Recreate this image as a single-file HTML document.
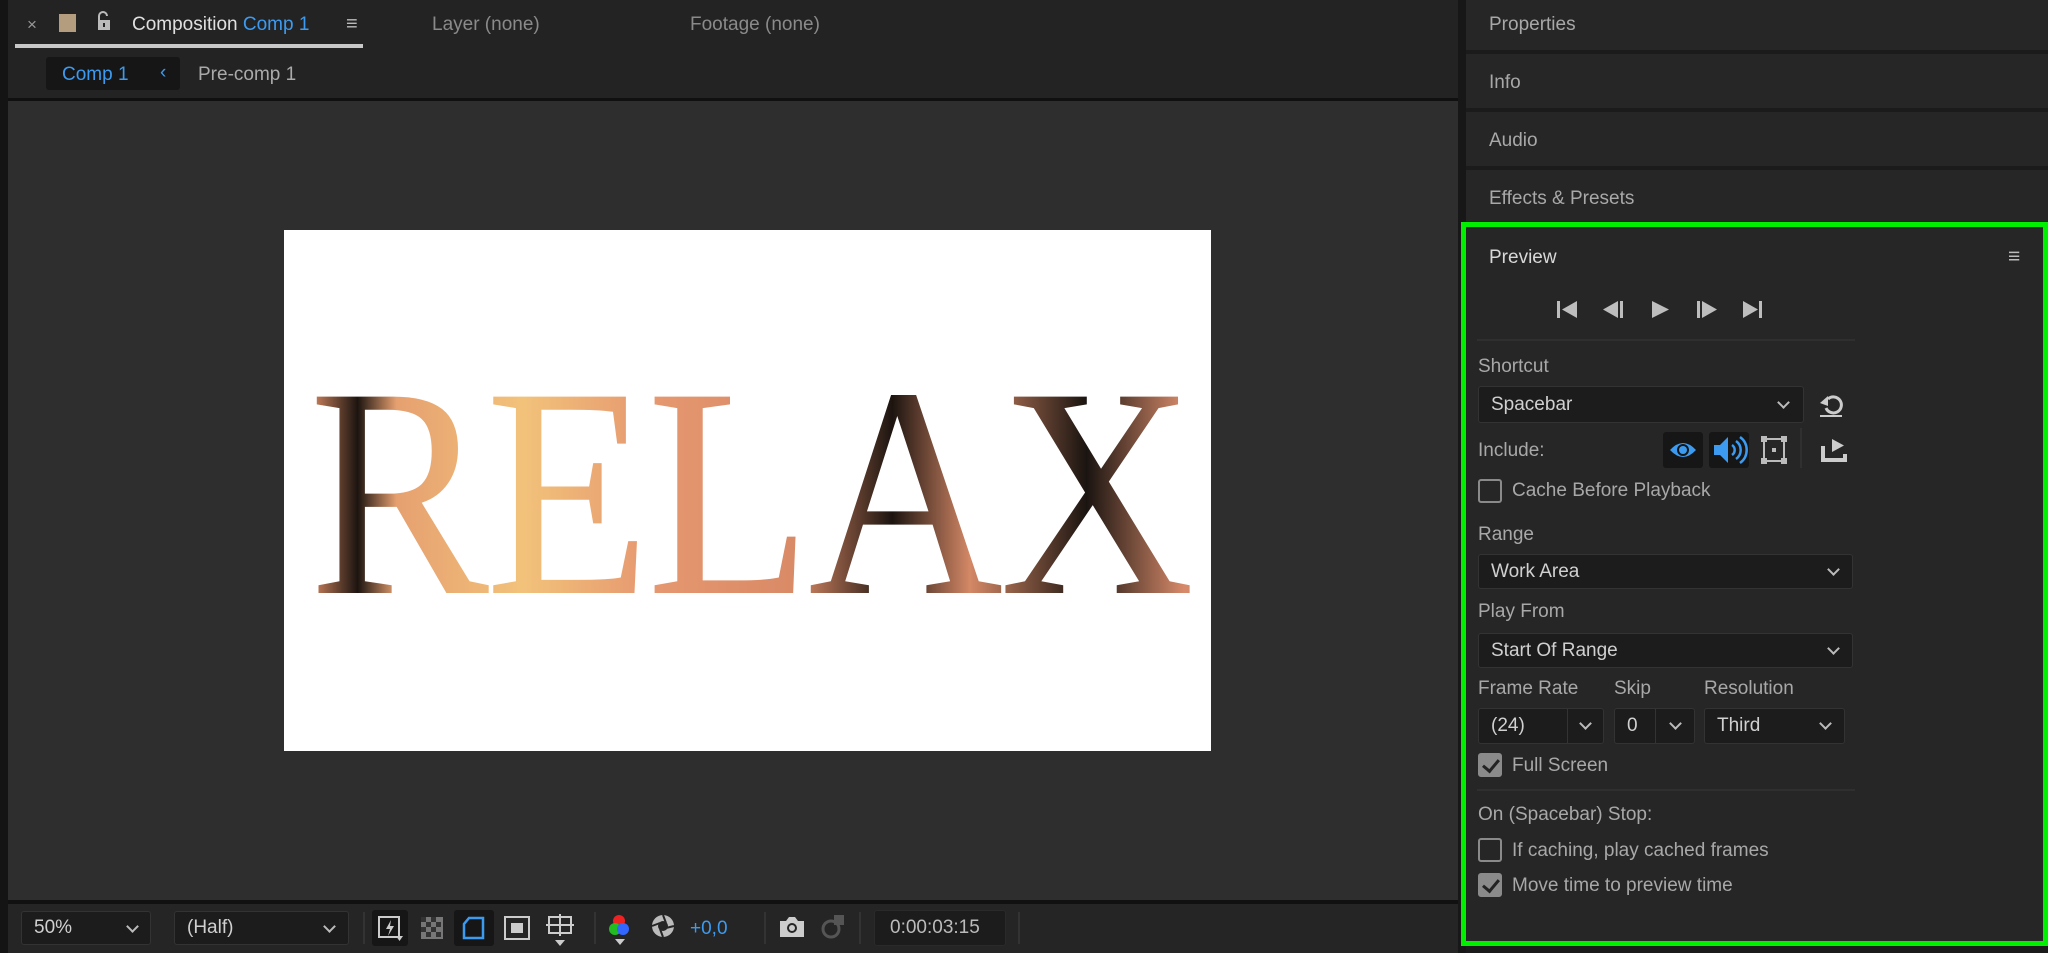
<!DOCTYPE html>
<html><head><meta charset="utf-8"><style>
*{margin:0;padding:0;box-sizing:border-box}
body{width:2048px;height:953px;background:#1b1b1b;position:relative;overflow:hidden;font-family:"Liberation Sans","DejaVu Sans",sans-serif;color:#a8a8a8}
.a{position:absolute}
.t{position:absolute;white-space:nowrap;font-size:19px;line-height:1}
.dd{position:absolute;background:#1c1c1c;border:1px solid #333;border-radius:3px;color:#d0d0d0;font-size:19px}
.dd span{position:absolute;left:12px;top:50%;transform:translateY(-50%)}
.chev{position:absolute;width:9px;height:9px;border-right:2px solid #bbb;border-bottom:2px solid #bbb;transform:rotate(45deg)}
.cb{position:absolute;width:24px;height:24px;border:2px solid #8a8a8a;border-radius:3px}
.cbk{background:#8a8a8a}
.cbk:after{content:"";position:absolute;left:6px;top:1px;width:7px;height:13px;border-right:3px solid #222;border-bottom:3px solid #222;transform:rotate(40deg)}
</style></head><body>
<!-- left panel -->
<div class="a" style="left:0;top:0;width:1458px;height:953px;background:#232323"></div>
<div class="a" style="left:0;top:0;width:8px;height:953px;background:#141414"></div>
<div class="t" style="left:27px;top:16px;font-size:17px;color:#999">×</div>
<div class="a" style="left:59px;top:14px;width:17px;height:18px;background:#b39d7e"></div>
<svg class="a" style="left:96px;top:10px" width="16" height="22" viewBox="0 0 16 22"><path d="M3 10V6a4 4 0 0 1 8 0" fill="none" stroke="#bbb" stroke-width="2"/><rect x="2" y="10" width="12" height="10" fill="#bbb"/><rect x="7" y="13" width="2" height="4" fill="#232323"/></svg>
<div class="t" style="left:132px;top:15px;color:#e0e0e0">Composition <span style="color:#3c9bf0">Comp 1</span></div>
<div class="t" style="left:346px;top:14px;color:#bbb;font-size:20px">≡</div>
<div class="a" style="left:15px;top:44px;width:348px;height:4px;background:#c8c8c8"></div>
<div class="t" style="left:432px;top:15px;color:#8a8a8a">Layer (none)</div>
<div class="t" style="left:690px;top:15px;color:#8a8a8a">Footage (none)</div>
<div class="a" style="left:46px;top:57px;width:134px;height:33px;background:#161616;border-radius:3px"></div>
<div class="t" style="left:62px;top:65px;color:#3c9bf0">Comp 1</div>
<div class="t" style="left:160px;top:63px;color:#3c9bf0">‹</div>
<div class="t" style="left:198px;top:65px;color:#aaa">Pre-comp 1</div>
<div class="a" style="left:8px;top:98px;width:1450px;height:3px;background:#101010"></div>
<div class="a" style="left:8px;top:101px;width:1450px;height:799px;background:#2e2e2e"></div>
<!-- canvas -->
<div class="a" style="left:284px;top:230px;width:927px;height:521px;background:#fff;overflow:hidden">
<div class="a" style="left:25px;top:155px;height:215px;font-family:'Liberation Serif',serif;font-size:300px;line-height:215px;letter-spacing:-4px;transform:scaleX(0.9);transform-origin:0 0;background:linear-gradient(90deg,#d88a62 0%,#1c1410 5%,#e6a070 9%,#f2c27a 22%,#e69870 35%,#d98a66 50%,#1c1410 60%,#d48866 68%,#1a1410 80%,#d68a6a 90%);-webkit-background-clip:text;background-clip:text;color:transparent;width:1080px">RELAX</div>
</div>
<!-- bottom toolbar -->
<div class="a" style="left:8px;top:900px;width:1450px;height:4px;background:#111"></div>
<div class="a" style="left:8px;top:904px;width:1450px;height:49px;background:#252525"></div>
<div class="dd" style="left:21px;top:911px;width:130px;height:34px"><span>50%</span><i class="chev" style="left:106px;top:10px"></i></div>
<div class="dd" style="left:174px;top:911px;width:175px;height:34px"><span>(Half)</span><i class="chev" style="left:150px;top:10px"></i></div>
<div class="a" style="left:363px;top:912px;width:2px;height:32px;background:#333"></div>
<div class="a" style="left:372px;top:910px;width:36px;height:36px;background:#161616;border-radius:3px"></div>
<svg class="a" style="left:378px;top:916px" width="26" height="26"><rect x="1" y="1" width="20" height="20" fill="none" stroke="#ccc" stroke-width="2"/><path d="M13 4l-5 9h4l-2 7 6-10h-4z" fill="#ccc"/><path d="M18 20h7l-3.5 5z" fill="#ccc"/></svg>
<svg class="a" style="left:420px;top:916px" width="24" height="24"><rect x="1" y="1" width="22" height="22" fill="#777"/><path d="M1 1h5v5H1zM11 1h5v5h-5zM6 6h5v5H6zM16 6h5v5h-5zM1 11h5v5H1zM11 11h5v5h-5zM6 16h5v5H6zM16 16h5v5h-5z" fill="#333"/></svg>
<div class="a" style="left:454px;top:910px;width:40px;height:36px;background:#161616;border-radius:3px"></div>
<svg class="a" style="left:461px;top:915px" width="26" height="26"><path d="M8 3h14v20H3V9z" fill="none" stroke="#3c9bf0" stroke-width="2.5"/></svg>
<svg class="a" style="left:504px;top:916px" width="26" height="24"><rect x="1" y="1" width="24" height="22" fill="none" stroke="#ccc" stroke-width="2"/><rect x="7" y="7" width="12" height="10" fill="#ccc"/></svg>
<svg class="a" style="left:546px;top:912px" width="28" height="34"><rect x="3" y="5" width="22" height="16" fill="none" stroke="#ccc" stroke-width="2"/><path d="M14 2v22M0 13h28" stroke="#ccc" stroke-width="2"/><path d="M9 28h10l-5 6z" fill="#ccc"/></svg>
<div class="a" style="left:594px;top:912px;width:2px;height:32px;background:#333"></div>
<svg class="a" style="left:606px;top:912px" width="28" height="34"><circle cx="13" cy="9" r="6" fill="#e22"/><circle cx="9" cy="17" r="6" fill="#2b2"/><circle cx="17" cy="17" r="6" fill="#36f"/><path d="M9 27h10l-5 6z" fill="#ccc"/></svg>
<svg class="a" style="left:650px;top:913px" width="26" height="26"><circle cx="13" cy="13" r="11" fill="#bbb"/><circle cx="13" cy="13" r="5" fill="#252525"/><path d="M13 2l3 8M24 13l-8 2M13 24l-3-8M2 13l8-3" stroke="#252525" stroke-width="2"/></svg>
<div class="t" style="left:690px;top:919px;color:#3c9bf0">+0,0</div>
<div class="a" style="left:764px;top:912px;width:2px;height:32px;background:#333"></div>
<svg class="a" style="left:778px;top:915px" width="28" height="24"><path d="M2 6h6l3-4h6l3 4h6v16H2z" fill="#ccc"/><circle cx="14" cy="13" r="5" fill="#252525"/><circle cx="14" cy="13" r="3" fill="#ccc"/></svg>
<svg class="a" style="left:820px;top:911px" width="28" height="30"><circle cx="11" cy="18" r="8" fill="none" stroke="#555" stroke-width="3"/><path d="M14 4h10v10H14z" fill="#555"/></svg>
<div class="a" style="left:859px;top:912px;width:2px;height:32px;background:#333"></div>
<div class="dd" style="left:874px;top:910px;width:132px;height:36px;border-color:#2a2a2a"><span style="color:#bbb;left:15px">0:00:03:15</span></div>
<div class="a" style="left:1018px;top:912px;width:2px;height:32px;background:#333"></div>
<!-- right panels -->
<div class="a" style="left:1458px;top:0;width:8px;height:953px;background:#171717"></div>
<div class="a" style="left:1466px;top:0;width:582px;height:50px;background:#262626"></div>
<div class="a" style="left:1466px;top:54px;width:582px;height:54px;background:#262626"></div>
<div class="a" style="left:1466px;top:112px;width:582px;height:54px;background:#262626"></div>
<div class="a" style="left:1466px;top:170px;width:582px;height:52px;background:#262626"></div>
<div class="t" style="left:1489px;top:15px">Properties</div>
<div class="t" style="left:1489px;top:73px">Info</div>
<div class="t" style="left:1489px;top:131px">Audio</div>
<div class="t" style="left:1489px;top:189px">Effects &amp; Presets</div>
<!-- preview panel -->
<div class="a" style="left:1461px;top:222px;width:587px;height:724px;background:#262626;border:5px solid #00f000"></div>
<div class="t" style="left:1489px;top:248px;color:#d8d8d8">Preview</div>
<div class="t" style="left:2008px;top:246px;color:#bbb;font-size:21px">≡</div>
<svg class="a" style="left:1555px;top:299px" width="220" height="22" fill="#bdbdbd">
<rect x="2" y="2" width="3" height="17"/><path d="M22 2v17L7 10.5z"/>
<path d="M63 2v17L48 10.5z"/><rect x="65" y="2" width="3" height="17"/>
<path d="M97 2v17l17-8.5z"/>
<rect x="142" y="2" width="3" height="17"/><path d="M147 2v17l15-8.5z"/>
<path d="M188 2v17l15-8.5z"/><rect x="204" y="2" width="3" height="17"/>
</svg>
<div class="a" style="left:1477px;top:339px;width:378px;height:2px;background:#2f2f2f"></div>
<div class="t" style="left:1478px;top:357px">Shortcut</div>
<div class="dd" style="left:1478px;top:386px;width:326px;height:37px"><span>Spacebar</span><i class="chev" style="left:300px;top:11px"></i></div>
<svg class="a" style="left:1818px;top:392px" width="28" height="28"><path d="M10 7a8 8 0 1 1-2 9" fill="none" stroke="#ccc" stroke-width="3"/><path d="M2 11l8-7v10z" fill="#ccc"/><rect x="2" y="23" width="22" height="2" fill="#ccc"/></svg>
<div class="t" style="left:1478px;top:441px">Include:</div>
<div class="a" style="left:1663px;top:432px;width:40px;height:36px;background:#161616;border-radius:3px"></div>
<svg class="a" style="left:1668px;top:438px" width="30" height="24"><path d="M2 12Q15 -2 28 12Q15 26 2 12z" fill="#3c9bf0"/><circle cx="15" cy="12" r="6" fill="#161616"/><circle cx="15" cy="12" r="4" fill="#3c9bf0"/></svg>
<div class="a" style="left:1709px;top:432px;width:40px;height:36px;background:#161616;border-radius:3px"></div>
<svg class="a" style="left:1712px;top:435px" width="36" height="30"><path d="M2 10h6l8-8v26l-8-8H2z" fill="#3c9bf0"/><path d="M20 10a6 6 0 0 1 0 10M24 6a11 11 0 0 1 0 18M28 2a16 16 0 0 1 0 26" fill="none" stroke="#3c9bf0" stroke-width="2.5"/></svg>
<svg class="a" style="left:1760px;top:435px" width="28" height="30"><rect x="4" y="4" width="20" height="22" fill="none" stroke="#bbb" stroke-width="2"/><g fill="#bbb"><rect x="1" y="1" width="6" height="6"/><rect x="21" y="1" width="6" height="6"/><rect x="1" y="23" width="6" height="6"/><rect x="21" y="23" width="6" height="6"/><rect x="12" y="13" width="4" height="4"/></g></svg>
<div class="a" style="left:1800px;top:428px;width:2px;height:40px;background:#303030"></div>
<svg class="a" style="left:1820px;top:436px" width="28" height="28"><path d="M3 10v14h22v-6" fill="none" stroke="#ccc" stroke-width="4"/><path d="M12 3v13l12-6.5z" fill="#ccc"/></svg>
<div class="cb" style="left:1478px;top:479px"></div>
<div class="t" style="left:1512px;top:481px">Cache Before Playback</div>
<div class="t" style="left:1478px;top:525px">Range</div>
<div class="dd" style="left:1478px;top:554px;width:375px;height:35px"><span>Work Area</span><i class="chev" style="left:350px;top:10px"></i></div>
<div class="t" style="left:1478px;top:602px">Play From</div>
<div class="dd" style="left:1478px;top:633px;width:375px;height:35px"><span>Start Of Range</span><i class="chev" style="left:350px;top:10px"></i></div>
<div class="t" style="left:1478px;top:679px">Frame Rate</div>
<div class="t" style="left:1614px;top:679px">Skip</div>
<div class="t" style="left:1704px;top:679px">Resolution</div>
<div class="dd" style="left:1478px;top:708px;width:126px;height:36px"><span>(24)</span><i class="a" style="left:88px;top:0;width:1px;height:34px;background:#333"></i><i class="chev" style="left:102px;top:10px"></i></div>
<div class="dd" style="left:1614px;top:708px;width:81px;height:36px"><span>0</span><i class="a" style="left:40px;top:0;width:1px;height:34px;background:#333"></i><i class="chev" style="left:56px;top:10px"></i></div>
<div class="dd" style="left:1704px;top:708px;width:141px;height:36px"><span>Third</span><i class="chev" style="left:116px;top:10px"></i></div>
<div class="cb cbk" style="left:1478px;top:753px"></div>
<div class="t" style="left:1512px;top:756px">Full Screen</div>
<div class="a" style="left:1477px;top:789px;width:378px;height:2px;background:#2f2f2f"></div>
<div class="t" style="left:1478px;top:805px">On (Spacebar) Stop:</div>
<div class="cb" style="left:1478px;top:838px"></div>
<div class="t" style="left:1512px;top:841px">If caching, play cached frames</div>
<div class="cb cbk" style="left:1478px;top:873px"></div>
<div class="t" style="left:1512px;top:876px">Move time to preview time</div>
</body></html>
